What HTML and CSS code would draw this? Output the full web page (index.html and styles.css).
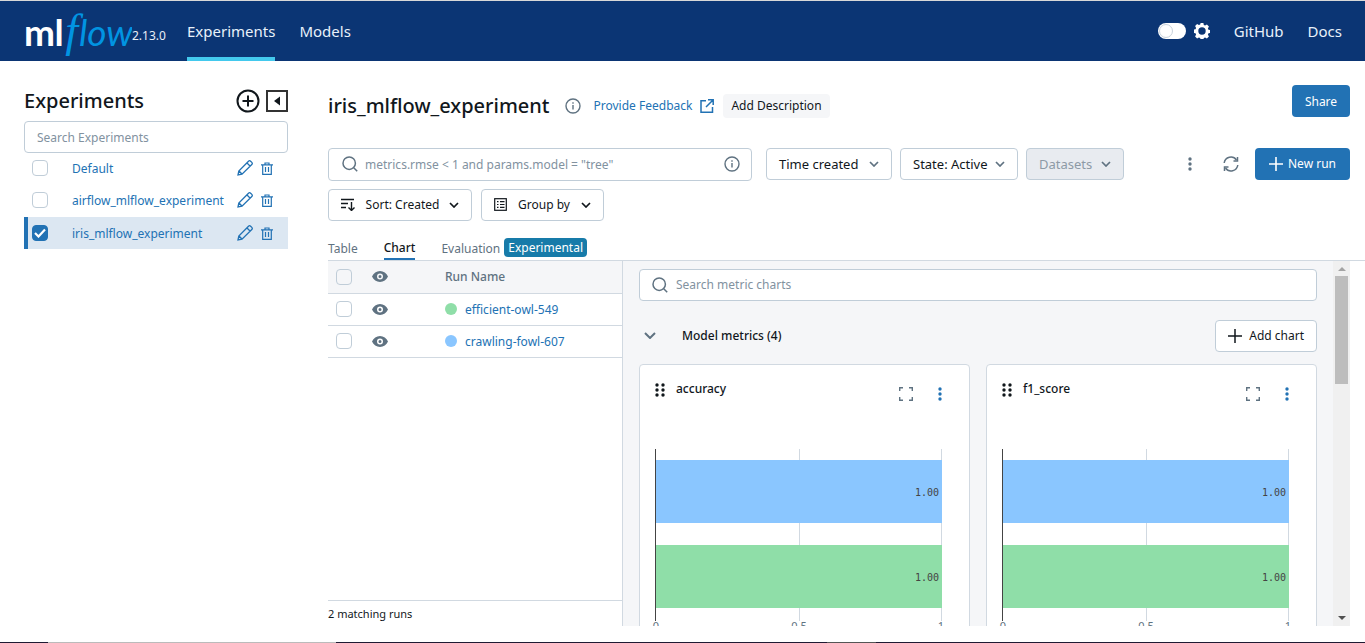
FILE: index.html
```html
<!DOCTYPE html>
<html lang="en">
<head>
  <meta charset="UTF-8">
  <title>MLflow Experiments</title>
  <link rel="stylesheet" href="styles.css">
</head>
<body>

<div class="top-line"></div>

<header class="topbar">
  <div class="logo"><span class="logo-ml">ml</span><span class="logo-f">f</span><span class="logo-low">low</span></div>
  <span class="version">2.13.0</span>
  <nav class="nav">
    <a class="nav-link active" href="#">Experiments</a>
    <a class="nav-link" href="#">Models</a>
  </nav>
  <div class="topbar-right">
    <span class="toggle"><span class="knob"></span></span>
    <svg class="gear" width="16" height="16" viewBox="0 0 16 16"><path fill="#fff" fill-rule="evenodd" d="M6.6 0h2.8l.4 2 1.3.6 1.8-1 2 2-1 1.8.6 1.3 2 .4v2.8l-2 .4-.6 1.3 1 1.8-2 2-1.800-1-1.300.6-.4 2H6.600l-.4-2-1.300-.6-1.800 1-2-2 1-1.800-.6-1.300-2-.4V6.600l2-.4.6-1.300-1-1.800 2-2 1.800 1 1.300-.6zM8 4.300a3.700 3.700 0 1 0 0 7.400 3.700 3.700 0 0 0 0-7.400z"/></svg>
    <a class="nav-link github" href="#">GitHub</a>
    <a class="nav-link" href="#">Docs</a>
  </div>
</header>

<div class="page">
  <aside class="sidebar">
    <div class="sidebar-head">
      <h2>Experiments</h2>
      <div class="sidebar-tools">
        <svg width="24" height="24" viewBox="0 0 24 24" fill="none" stroke="#11171c" stroke-width="2"><circle cx="12" cy="12" r="10.500"/><path d="M12 6.500v11M6.500 12h11"/></svg>
        <svg width="22" height="22" viewBox="0 0 22 22"><rect x="1" y="1" width="20" height="20" fill="none" stroke="#333" stroke-width="2"/><path d="M14 6.500v9L8 11z" fill="#11171c"/></svg>
      </div>
    </div>
    <input class="text-input" type="text" placeholder="Search Experiments">
    <ul class="exp-list">
      <li class="exp-row">
        <span class="check"></span>
        <a class="exp-name" href="#">Default</a>
        <svg class="icon-edit" width="16" height="16" viewBox="0 0 16 16" fill="none" stroke="#2272b4" stroke-width="1.300"><path d="M1 15l.8-4L11.500 1.200a1.500 1.500 0 0 1 2.100 0l1.200 1.200a1.500 1.500 0 0 1 0 2.100L5 14.200zM10 3l3 3M2 11l3 3"/></svg>
        <svg class="icon-trash" width="12" height="13" viewBox="0 0 12 13" fill="none" stroke="#2272b4" stroke-width="1.200"><path d="M0 2.800h12M4 2.800V1h4v1.800M1.700 2.800v9.600h8.600V2.800M4.500 5v5M7.500 5v5"/></svg>
      </li>
      <li class="exp-row">
        <span class="check"></span>
        <a class="exp-name" href="#">airflow_mlflow_experiment</a>
        <svg class="icon-edit" width="16" height="16" viewBox="0 0 16 16" fill="none" stroke="#2272b4" stroke-width="1.300"><path d="M1 15l.8-4L11.500 1.200a1.500 1.500 0 0 1 2.100 0l1.200 1.200a1.500 1.500 0 0 1 0 2.100L5 14.200zM10 3l3 3M2 11l3 3"/></svg>
        <svg class="icon-trash" width="12" height="13" viewBox="0 0 12 13" fill="none" stroke="#2272b4" stroke-width="1.200"><path d="M0 2.800h12M4 2.800V1h4v1.800M1.700 2.800v9.600h8.600V2.800M4.500 5v5M7.500 5v5"/></svg>
      </li>
      <li class="exp-row selected">
        <span class="check checked"><svg width="12" height="10" viewBox="0 0 12 10" fill="none" stroke="#fff" stroke-width="2.200"><path d="M1 5l3.500 3.500L11 1.500"/></svg></span>
        <a class="exp-name" href="#">iris_mlflow_experiment</a>
        <svg class="icon-edit" width="16" height="16" viewBox="0 0 16 16" fill="none" stroke="#2272b4" stroke-width="1.300"><path d="M1 15l.8-4L11.500 1.200a1.500 1.500 0 0 1 2.100 0l1.200 1.200a1.500 1.500 0 0 1 0 2.100L5 14.200zM10 3l3 3M2 11l3 3"/></svg>
        <svg class="icon-trash" width="12" height="13" viewBox="0 0 12 13" fill="none" stroke="#2272b4" stroke-width="1.200"><path d="M0 2.800h12M4 2.800V1h4v1.800M1.700 2.800v9.600h8.600V2.800M4.500 5v5M7.500 5v5"/></svg>
      </li>
    </ul>
  </aside>

  <main class="content">
    <div class="title-row">
      <h1>iris_mlflow_experiment</h1>
      <svg class="title-info" width="16" height="16" viewBox="0 0 16 16" fill="none" stroke="#5f7281" stroke-width="1.400"><circle cx="8" cy="8" r="7"/><path d="M8 7v4.500M8 4.200v1.600"/></svg>
      <a class="feedback" href="#">Provide Feedback</a>
      <svg class="ext" width="14" height="14" viewBox="0 0 14 14" fill="none" stroke="#2272b4" stroke-width="1.500"><path d="M6 1.700H1v11.500h11.500V8M8 .8h5.200V6M13 1L6 8"/></svg>
      <button class="btn-soft">Add Description</button>
      <button class="btn-primary share">Share</button>
    </div>

    <div class="filter-row">
      <div class="run-search">
        <svg width="16" height="16" viewBox="0 0 16 16" fill="none" stroke="#5f7281" stroke-width="1.500"><circle cx="7.200" cy="7.200" r="6.200"/><path d="M11.700 11.700l3.500 3.500"/></svg>
        <span class="run-search-text">metrics.rmse &lt; 1 and params.model = "tree"</span>
        <svg width="16" height="16" viewBox="0 0 16 16" fill="none" stroke="#5f7281" stroke-width="1.400"><circle cx="8" cy="8" r="7"/><path d="M8 7v4.500M8 4.200v1.600"/></svg>
      </div>
      <button class="btn w-time">Time created<svg class="chev" width="10" height="6" viewBox="0 0 10 6" fill="none" stroke="#5f7281" stroke-width="1.700"><path d="M1 1l4 4 4-4"/></svg></button>
      <button class="btn w-state">State: Active<svg class="chev" width="10" height="6" viewBox="0 0 10 6" fill="none" stroke="#5f7281" stroke-width="1.700"><path d="M1 1l4 4 4-4"/></svg></button>
      <button class="btn disabled w-data">Datasets<svg class="chev" width="10" height="6" viewBox="0 0 10 6" fill="none" stroke="#5f7281" stroke-width="1.700"><path d="M1 1l4 4 4-4"/></svg></button>
      <div class="filter-right">
        <svg class="kebab" width="4" height="14" viewBox="0 0 4 14" fill="#5f7281"><circle cx="2" cy="2" r="1.700"/><circle cx="2" cy="7" r="1.700"/><circle cx="2" cy="12" r="1.700"/></svg>
        <svg class="refresh" width="16" height="16" viewBox="0 0 16 16" fill="none" stroke="#5f7281" stroke-width="1.500"><path d="M1.200 7A6.800 6.800 0 0 1 13.500 4M14.800 9A6.800 6.800 0 0 1 2.500 12"/><path d="M14.500 1v4h-4M1.500 15v-4h4"/></svg>
        <button class="btn-primary new-run"><svg width="14" height="14" viewBox="0 0 14 14" stroke="#fff" stroke-width="1.600"><path d="M7 0v14M0 7h14"/></svg>New run</button>
      </div>
    </div>

    <div class="sort-row">
      <button class="btn small w-sort"><svg width="15" height="13" viewBox="0 0 15 13" fill="none" stroke="#11171c" stroke-width="1.400"><path d="M0 1.500h13M0 5.500h7M0 9.500h5M10.500 4v8.500M7.500 9.500l3 3 3-3"/></svg>Sort: Created<svg class="chev" width="10" height="6" viewBox="0 0 10 6" fill="none" stroke="#11171c" stroke-width="1.700"><path d="M1 1l4 4 4-4"/></svg></button>
      <button class="btn small w-group"><svg width="13" height="13" viewBox="0 0 13 13" fill="none" stroke="#11171c" stroke-width="1.200"><rect x=".7" y=".7" width="11.600" height="11.600"/><path d="M3 3.700h1.500M6 3.700h4.500M3 6.500h1.500M6 6.500h4.500M3 9.300h1.500M6 9.300h4.500"/></svg>Group by<svg class="chev" width="10" height="6" viewBox="0 0 10 6" fill="none" stroke="#11171c" stroke-width="1.700"><path d="M1 1l4 4 4-4"/></svg></button>
    </div>

    <div class="tabs">
      <span class="tab">Table</span>
      <span class="tab active">Chart</span>
      <span class="tab eval">Evaluation</span>
      <span class="badge">Experimental</span>
    </div>

    <div class="workspace">
      <section class="runs">
        <div class="runs-row runs-head">
          <span class="check"></span>
          <svg class="eye" width="16" height="11" viewBox="0 0 16 11"><path fill="#5f7281" fill-rule="evenodd" d="M8 0c3.500 0 6.500 2.200 8 5.500C14.500 8.800 11.500 11 8 11S1.500 8.800 0 5.500C1.500 2.200 4.500 0 8 0zm0 2.500a3 3 0 1 0 0 6 3 3 0 0 0 0-6zm0 1.500a1.500 1.500 0 1 1 0 3 1.500 1.500 0 0 1 0-3z"/></svg>
          <span class="run-title">Run Name</span>
        </div>
        <div class="runs-row">
          <span class="check"></span>
          <svg class="eye" width="16" height="11" viewBox="0 0 16 11"><path fill="#5f7281" fill-rule="evenodd" d="M8 0c3.500 0 6.500 2.200 8 5.500C14.500 8.800 11.500 11 8 11S1.500 8.800 0 5.500C1.500 2.200 4.500 0 8 0zm0 2.500a3 3 0 1 0 0 6 3 3 0 0 0 0-6zm0 1.500a1.500 1.500 0 1 1 0 3 1.500 1.500 0 0 1 0-3z"/></svg>
          <span class="dot green"></span>
          <a class="run-link" href="#">efficient-owl-549</a>
        </div>
        <div class="runs-row">
          <span class="check"></span>
          <svg class="eye" width="16" height="11" viewBox="0 0 16 11"><path fill="#5f7281" fill-rule="evenodd" d="M8 0c3.500 0 6.500 2.200 8 5.500C14.500 8.800 11.500 11 8 11S1.500 8.800 0 5.500C1.500 2.200 4.500 0 8 0zm0 2.500a3 3 0 1 0 0 6 3 3 0 0 0 0-6zm0 1.500a1.500 1.500 0 1 1 0 3 1.500 1.500 0 0 1 0-3z"/></svg>
          <span class="dot blue"></span>
          <a class="run-link" href="#">crawling-fowl-607</a>
        </div>
        <div class="runs-foot">2 matching runs</div>
      </section>

      <section class="charts">
        <div class="charts-body">
          <div class="chart-search">
            <svg width="16" height="16" viewBox="0 0 16 16" fill="none" stroke="#5f7281" stroke-width="1.500"><circle cx="7.200" cy="7.200" r="6.200"/><path d="M11.700 11.700l3.500 3.500"/></svg>
            <span>Search metric charts</span>
          </div>
          <div class="section-head">
            <svg class="section-chev" width="12" height="7" viewBox="0 0 12 7" fill="none" stroke="#5f7281" stroke-width="2"><path d="M1 1l5 5 5-5"/></svg>
            <span class="section-name">Model metrics (4)</span>
            <button class="btn small add-chart"><svg width="14" height="14" viewBox="0 0 14 14" stroke="#11171c" stroke-width="1.500"><path d="M7 0v14M0 7h14"/></svg>Add chart</button>
          </div>
          <div class="chart-grid">
            <article class="card">
              <div class="card-head">
                <svg class="drag" width="10" height="14" viewBox="0 0 10 14" fill="#11171c"><circle cx="2" cy="2" r="1.700"/><circle cx="8" cy="2" r="1.700"/><circle cx="2" cy="7" r="1.700"/><circle cx="8" cy="7" r="1.700"/><circle cx="2" cy="12" r="1.700"/><circle cx="8" cy="12" r="1.700"/></svg>
                <span class="card-title">accuracy</span>
                <svg class="full" width="14" height="14" viewBox="0 0 14 14" fill="none" stroke="#5f7281" stroke-width="1.400"><path d="M.7 4V.7H4M10 .7h3.300V4M13.300 10v3.300H10M4 13.300H.7V10"/></svg>
                <svg class="dots" width="4" height="14" viewBox="0 0 4 14" fill="#2272b4"><circle cx="2" cy="2" r="1.700"/><circle cx="2" cy="7" r="1.700"/><circle cx="2" cy="12" r="1.700"/></svg>
              </div>
              <svg class="plot" width="329" height="195" viewBox="0 0 329 195">
                <path d="M159.500 0v172M301.500 0v172" stroke="#d1d9e1"/>
                <rect x="16" y="11" width="286" height="63" fill="#8ac6ff"/>
                <rect x="16" y="96" width="286" height="63" fill="#8fdea8"/>
                <path d="M15.500 0v172" stroke="#444"/>
                <text class="bar-val" x="299" y="47" text-anchor="end">1.00</text>
                <text class="bar-val" x="299" y="132" text-anchor="end">1.00</text>
                <text class="tick" x="16" y="181" text-anchor="middle">0</text>
                <text class="tick" x="159" y="181" text-anchor="middle">0.5</text>
                <text class="tick" x="301" y="181" text-anchor="middle">1</text>
              </svg>
            </article>
            <article class="card">
              <div class="card-head">
                <svg class="drag" width="10" height="14" viewBox="0 0 10 14" fill="#11171c"><circle cx="2" cy="2" r="1.700"/><circle cx="8" cy="2" r="1.700"/><circle cx="2" cy="7" r="1.700"/><circle cx="8" cy="7" r="1.700"/><circle cx="2" cy="12" r="1.700"/><circle cx="8" cy="12" r="1.700"/></svg>
                <span class="card-title">f1_score</span>
                <svg class="full" width="14" height="14" viewBox="0 0 14 14" fill="none" stroke="#5f7281" stroke-width="1.400"><path d="M.7 4V.7H4M10 .7h3.300V4M13.300 10v3.300H10M4 13.300H.7V10"/></svg>
                <svg class="dots" width="4" height="14" viewBox="0 0 4 14" fill="#2272b4"><circle cx="2" cy="2" r="1.700"/><circle cx="2" cy="7" r="1.700"/><circle cx="2" cy="12" r="1.700"/></svg>
              </div>
              <svg class="plot" width="329" height="195" viewBox="0 0 329 195">
                <path d="M159.500 0v172M301.500 0v172" stroke="#d1d9e1"/>
                <rect x="16" y="11" width="286" height="63" fill="#8ac6ff"/>
                <rect x="16" y="96" width="286" height="63" fill="#8fdea8"/>
                <path d="M15.500 0v172" stroke="#444"/>
                <text class="bar-val" x="299" y="47" text-anchor="end">1.00</text>
                <text class="bar-val" x="299" y="132" text-anchor="end">1.00</text>
                <text class="tick" x="16" y="181" text-anchor="middle">0</text>
                <text class="tick" x="159" y="181" text-anchor="middle">0.5</text>
                <text class="tick" x="301" y="181" text-anchor="middle">1</text>
              </svg>
            </article>
          </div>
        </div>
        <div class="scrollbar">
          <span class="arrow up"></span>
          <span class="thumb"></span>
          <span class="arrow down"></span>
        </div>
      </section>
    </div>
  </main>
</div>

<div class="bottom-gap"></div>
<div class="bottom-line"></div>

</body>
</html>
```

FILE: styles.css
```css
* { box-sizing: border-box; }

html, body {
  height: 643px;
  overflow: hidden;
}

body {
  margin: 0;
  display: flex;
  flex-direction: column;
  background: #fff;
  color: #11171c;
  font-family: 'Noto Sans', sans-serif;
  font-size: 13px;
}

a { text-decoration: none; }

button { font-family: inherit; }

.top-line {
  height: 1px;
  background: #d8d8d8;
}

.bottom-gap { height: 16px; }

.bottom-line {
  height: 1px;
  background: linear-gradient(90deg, #1f1a33 48px, #bbb 48px, #bbb 336px, #1f1a33 336px, #1f1a33 827px, #555 827px, #555 876px, #1f1a33 876px);
}

/* top bar */
.topbar {
  height: 60px;
  flex: none;
  display: flex;
  align-items: center;
  padding: 0 23px 0 24px;
  background: #0b3574;
}

.logo {
  display: flex;
  align-items: baseline;
  width: 108px;
  height: 50px;
  line-height: 50px;
  overflow: hidden;
  white-space: nowrap;
}

.logo-ml {
  color: #fff;
  font-family: 'Lato', sans-serif;
  font-size: 37px;
  font-weight: 700;
  letter-spacing: -0.5px;
}

.logo-f {
  color: #0194e2;
  font-family: 'Liberation Serif', serif;
  font-size: 46px;
  font-style: italic;
  margin: 0 1px 0 2px;
}

.logo-low {
  color: #0194e2;
  font-family: 'Lato', sans-serif;
  font-size: 37px;
  font-style: italic;
}

.version {
  width: 55px;
  margin-top: 8px;
  color: #e8eef6;
  font-size: 12px;
}

.nav {
  display: flex;
  gap: 24px;
  height: 100%;
}

.nav-link {
  display: flex;
  align-items: center;
  color: #e8f1fa;
  font-size: 15px;
}

.nav-link.active {
  padding-top: 4px;
  border-bottom: 4px solid #43c9ed;
}

.topbar-right {
  margin-left: auto;
  display: flex;
  align-items: center;
  height: 100%;
}

.toggle {
  width: 28px;
  height: 16px;
  border-radius: 8px;
  background: #fff;
  padding: 1px 0 0 1px;
}

.knob {
  display: block;
  width: 14px;
  height: 14px;
  border-radius: 50%;
  background: #fff;
  border: 1px solid #c8d2dc;
}

.gear { margin: 0 24px 0 8px; }

.github { margin-right: 24px; }

/* sidebar */
.page {
  flex: 1;
  min-height: 0;
  display: flex;
}

.sidebar {
  width: 328px;
  flex: none;
  padding: 25px 40px 0 24px;
}

.sidebar-head {
  display: flex;
  align-items: center;
  justify-content: space-between;
  height: 29px;
  margin-bottom: 6px;
}

.sidebar-head h2 {
  margin: 0;
  font-size: 20px;
  font-weight: 500;
}

.sidebar-tools {
  display: flex;
  align-items: center;
  gap: 6px;
}

.text-input {
  display: block;
  width: 100%;
  height: 32px;
  padding: 0 12px;
  border: 1px solid #c0cdd8;
  border-radius: 4px;
  font-family: inherit;
  font-size: 12px;
  outline: none;
}

.text-input::placeholder { color: #82929f; }

.exp-list {
  list-style: none;
  margin: -1px 0 0;
  padding: 0;
}

.exp-row {
  display: flex;
  align-items: center;
  height: 32px;
  padding-left: 8px;
  font-size: 12px;
}

.exp-row.selected {
  padding-left: 4px;
  border-left: 4px solid #2272b4;
  background: #dce7f2;
  margin-top: 1px;
}

.check {
  width: 16px;
  height: 16px;
  flex: none;
  display: flex;
  align-items: center;
  justify-content: center;
  background: #fff;
  border: 1px solid #c0cdd8;
  border-radius: 4px;
}

.check.checked {
  background: #2272b4;
  border-color: #2272b4;
}

.exp-name {
  margin-left: 24px;
  width: 163px;
  white-space: nowrap;
  color: #2272b4;
}

.icon-trash { margin-left: 8px; }

.icon-edit { margin-left: 2px; }

/* main area */
.content {
  flex: 1;
  min-width: 0;
  padding-right: 15px;
  display: flex;
  flex-direction: column;
}

.title-row {
  display: flex;
  align-items: center;
  height: 32px;
  margin-top: 29px;
}

.title-row h1 {
  margin: 0 15px 0 0;
  font-size: 20px;
  font-weight: 500;
}

.feedback {
  margin-left: 13px;
  color: #2272b4;
  font-size: 12px;
}

.ext { margin: 0 9px 0 8px; }

.btn-soft {
  height: 24px;
  padding: 0 8px;
  border: 0;
  border-radius: 4px;
  background: #f5f6f8;
  color: #11171c;
  font-size: 12px;
}

.btn-primary {
  display: flex;
  align-items: center;
  justify-content: center;
  height: 32px;
  border: 0;
  border-radius: 4px;
  background: #2272b4;
  color: #fff;
  font-size: 12px;
}

.share {
  margin-left: auto;
  width: 58px;
  margin-top: -9px;
}

.filter-row {
  display: flex;
  align-items: flex-start;
  gap: 8px;
  margin-top: 26px;
}

.run-search {
  display: flex;
  align-items: center;
  width: 424px;
  height: 33px;
  margin-right: 6px;
  padding: 0 11px 0 13px;
  border: 1px solid #c0cdd8;
  border-radius: 4px;
}

.run-search-text {
  flex: 1;
  margin-left: 7px;
  color: #82929f;
  font-size: 12px;
}

.btn {
  display: flex;
  align-items: center;
  justify-content: space-between;
  height: 32px;
  padding: 0 12px;
  background: #fff;
  border: 1px solid #c0cdd8;
  border-radius: 4px;
  color: #11171c;
  font-size: 13px;
}

.btn.small { font-size: 12px; }

.btn.disabled {
  background: #e8ebf0;
  color: #8d9aa6;
}

.w-time { width: 126px; }
.w-state { width: 118px; }
.w-data { width: 98px; }
.w-sort { width: 144px; }
.w-group { width: 123px; }

.filter-right {
  margin-left: auto;
  display: flex;
  align-items: center;
  height: 32px;
}

.refresh { margin: 0 16px 0 31px; }

.new-run {
  width: 95px;
  gap: 5px;
}

.sort-row {
  display: flex;
  gap: 9px;
  margin-top: 8px;
}

.tabs {
  display: flex;
  align-items: center;
  height: 40px;
  border-bottom: 1px solid #d1d9e1;
  margin-right: -15px;
  font-size: 12px;
}

.tab {
  display: flex;
  align-items: center;
  height: 24px;
  margin-top: 16px;
  color: #5f7281;
}

.tab.active {
  margin-left: 26px;
  color: #11171c;
  border-bottom: 2px solid #2272b4;
  font-weight: 500;
}

.tab.eval { margin-left: 26px; }

.badge {
  margin: 15px 0 0 4px;
  height: 19px;
  padding: 0 4px;
  line-height: 19px;
  border-radius: 4px;
  background: #177ba9;
  color: #fff;
}

/* runs table and charts */
.workspace {
  height: 369px;
  display: flex;
  overflow: hidden;
}

.runs {
  width: 295px;
  flex: none;
  display: flex;
  flex-direction: column;
  border-right: 1px solid #d1d9e1;
}

.runs-row {
  display: flex;
  align-items: center;
  height: 32px;
  padding-left: 8px;
  border-bottom: 1px solid #d1d9e1;
}

.runs-head {
  height: 33px;
  background: #f5f6f8;
}

.runs-head .check { background: #f5f6f8; }

.eye { margin: 0 57px 0 20px; flex: none; }

.run-title {
  color: #5f7281;
  font-size: 12px;
  font-weight: 500;
}

.dot {
  width: 12px;
  height: 12px;
  border-radius: 50%;
  margin-right: 8px;
}

.dot.green { background: #8fdea8; }
.dot.blue { background: #8ac6ff; }

.run-link {
  color: #2272b4;
  font-size: 12px;
}

.runs-foot {
  margin-top: auto;
  height: 26px;
  line-height: 26px;
  border-top: 1px solid #d1d9e1;
  font-size: 11px;
}

.charts {
  flex: 1;
  min-width: 0;
  display: flex;
  background: #f5f6f8;
}

.charts-body {
  flex: 1;
  min-width: 0;
  padding: 8px 16px 0;
}

.chart-search {
  display: flex;
  align-items: center;
  gap: 8px;
  height: 32px;
  padding: 0 12px;
  background: #fff;
  border: 1px solid #c0cdd8;
  border-radius: 4px;
  color: #82929f;
  font-size: 12px;
}

.section-head {
  display: flex;
  align-items: center;
  height: 32px;
  margin-top: 19px;
}

.section-chev { margin: 0 26px 0 5px; }

.section-name {
  font-size: 12px;
  font-weight: 500;
}

.add-chart {
  margin-left: auto;
  width: 102px;
}

.chart-grid {
  display: grid;
  grid-template-columns: 331px 331px;
  gap: 16px;
  margin-top: 12px;
}

.card {
  height: 300px;
  background: #fff;
  border: 1px solid #d1d9e1;
  border-radius: 4px;
}

.card-head {
  display: flex;
  align-items: flex-start;
  height: 84px;
  padding: 18px 27px 0 15px;
}

.card-title {
  margin: -3px 0 0 11px;
  font-size: 12px;
  font-weight: 500;
}

.full {
  margin: 4px 25px 0 auto;
}

.dots { margin-top: 4px; }

.plot { display: block; }

.bar-val {
  font-family: 'DejaVu Sans Mono', monospace;
  font-size: 10px;
  fill: #444;
}

.tick {
  font-family: 'Noto Sans', sans-serif;
  font-size: 11px;
  fill: #5f7281;
}

.scrollbar {
  width: 17px;
  margin-right: 0;
  flex: none;
  display: flex;
  flex-direction: column;
  align-items: center;
  background: #f0f0f0;
  position: relative;
}

.thumb {
  width: 13px;
  height: 108px;
  margin-top: 5px;
  background: #bdbdbd;
}

.arrow {
  width: 0;
  height: 0;
  border-left: 4px solid transparent;
  border-right: 4px solid transparent;
}

.arrow.up {
  margin-top: 6px;
  border-bottom: 4px solid #a3a3a3;
}

.arrow.down {
  margin-top: auto;
  margin-bottom: 6px;
  border-top: 4px solid #505050;
}
```
